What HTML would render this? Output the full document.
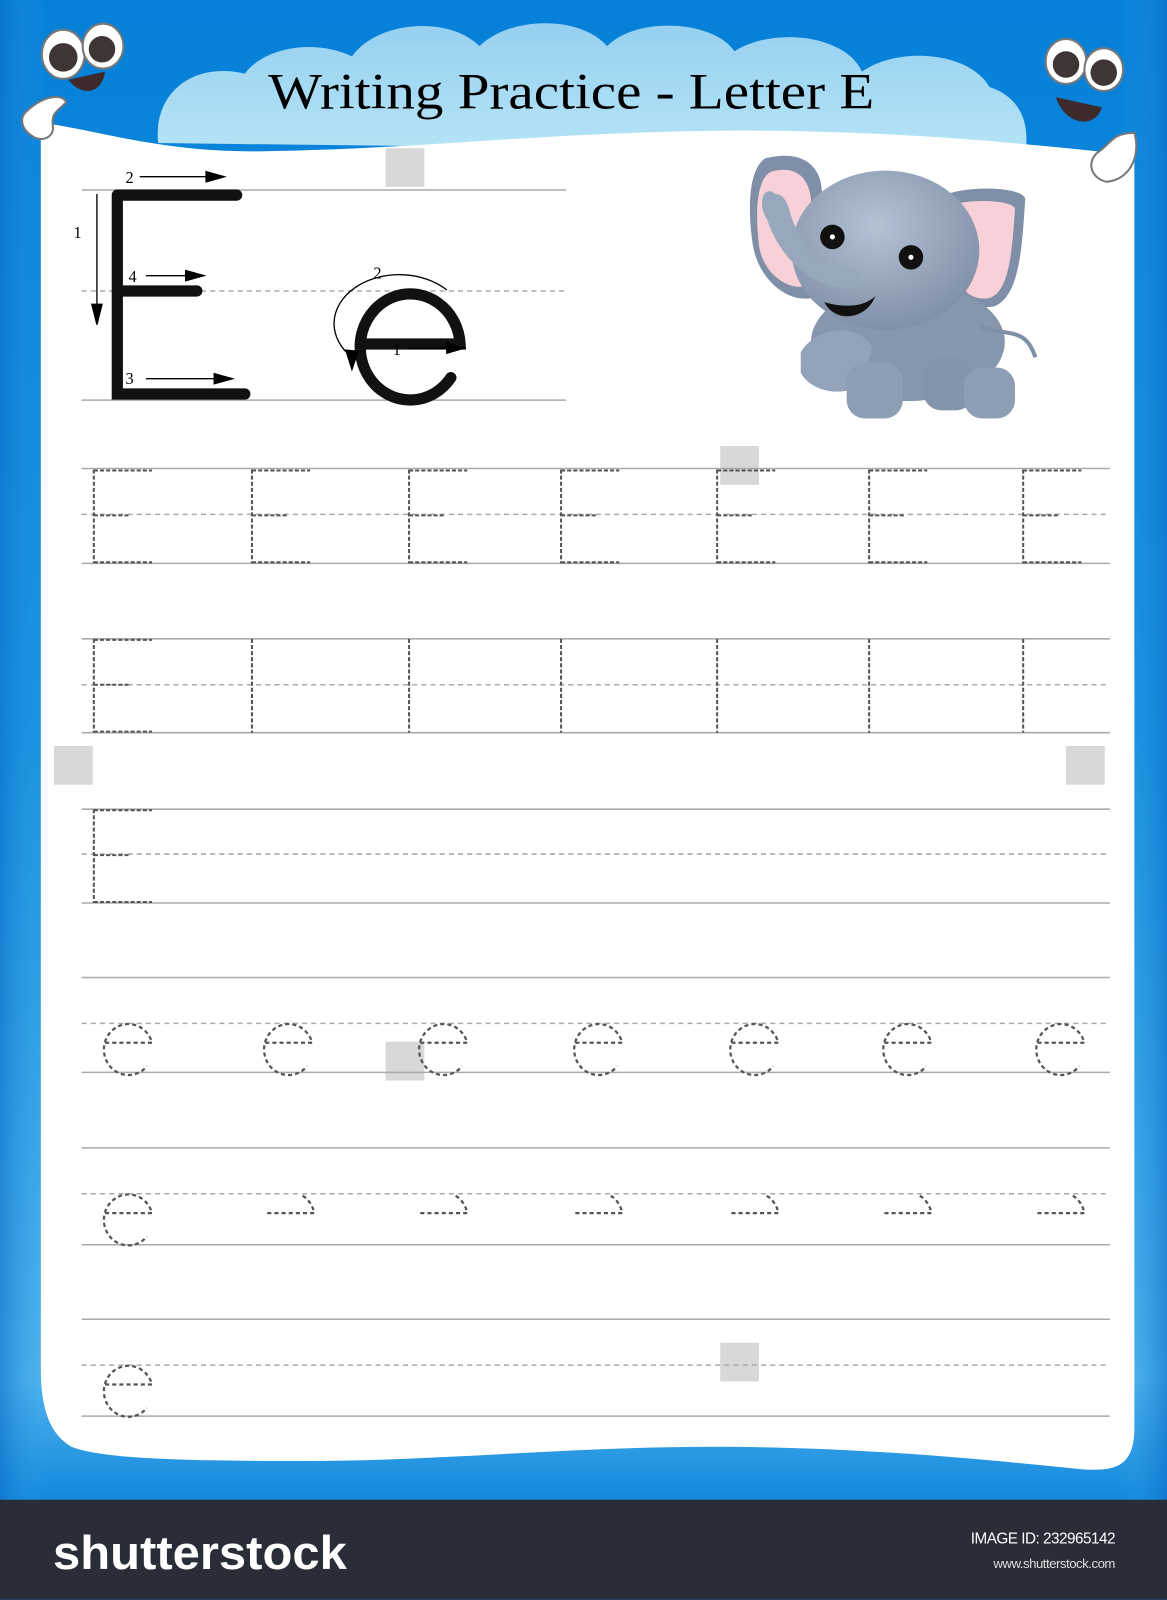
<!DOCTYPE html>
<html><head><meta charset="utf-8"><style>
html,body{margin:0;padding:0;width:1167px;height:1600px;overflow:hidden;background:#0a84d8}
svg{display:block}
</style></head><body>
<svg width="1167" height="1600" viewBox="0 0 1144 1568" xmlns="http://www.w3.org/2000/svg">
<defs>
<linearGradient id="bg" x1="0" y1="0" x2="0" y2="1"><stop offset="0" stop-color="#0680d8"/><stop offset="0.5" stop-color="#1a92e0"/><stop offset="0.92" stop-color="#4fb4ee"/><stop offset="1" stop-color="#1488dc"/></linearGradient>
<linearGradient id="bgx" x1="0" y1="0" x2="1" y2="0"><stop offset="0" stop-color="#0a6fc8" stop-opacity=".6"/><stop offset="0.04" stop-color="#3aa6ea" stop-opacity="0"/><stop offset="0.96" stop-color="#3aa6ea" stop-opacity="0"/><stop offset="1" stop-color="#0a6fc8" stop-opacity=".6"/></linearGradient>
<linearGradient id="cl" x1="0" y1="0" x2="0" y2="1"><stop offset="0" stop-color="#96d0f0"/><stop offset="1" stop-color="#b6e4f7"/></linearGradient>
<radialGradient id="el" cx="0.45" cy="0.35" r="0.7"><stop offset="0" stop-color="#b4c2d4"/><stop offset="1" stop-color="#7c8ca4"/></radialGradient>
<g id="E" fill="none" stroke="#555" stroke-width="2" stroke-dasharray="4 2">
<path d="M0 0V92M0 1H57M0 45H35M0 91H57"/></g>
<g id="ee" fill="none" stroke="#555" stroke-width="2.2" stroke-dasharray="4 3">
<path d="M-23 -6H23A24 25 0 1 0 18 17"/></g>
<g id="ep" fill="none" stroke="#555" stroke-width="2.2" stroke-dasharray="4 3">
<path d="M-23 -6H23A24 25 0 0 0 10 -24"/></g>
</defs>
<rect width="1144" height="1470" fill="url(#bg)"/>
<rect width="1144" height="1470" fill="url(#bgx)"/>
<path d="M155 140 C150 90 190 60 240 72 C260 45 310 38 345 55 C370 20 440 15 470 45 C500 15 570 15 595 45 C625 15 700 20 720 50 C760 25 830 35 845 70 C880 45 950 50 970 85 C1000 95 1010 120 1005 150 Z" fill="url(#cl)"/>
<text x="263" y="106" textLength="594" lengthAdjust="spacingAndGlyphs" font-family="Liberation Serif, serif" font-size="50" fill="#000">Writing Practice - Letter E</text>
<path d="M40 120 C100 128 160 150 260 148 C420 146 560 126 760 128 C900 130 1000 140 1112 152 L1112 1400 C1112 1440 1090 1442 1060 1440 C960 1430 840 1418 700 1418 C560 1418 430 1432 300 1432 C180 1432 100 1430 70 1418 C48 1405 40 1380 40 1340 Z" fill="#fff"/>
<g fill="#d8d8d8"><rect x="378" y="145" width="38" height="38"/><rect x="706" y="437" width="38" height="38"/><rect x="53" y="731" width="38" height="38"/><rect x="1045" y="731" width="38" height="38"/><rect x="378" y="1021" width="38" height="38"/><rect x="706" y="1316" width="38" height="38"/></g>
<g stroke="#aaa" stroke-width="1.5"><path d="M80 186H555M80 392H555"/><path d="M80 285H555" stroke-dasharray="5 4"/></g>
<g stroke="#111" stroke-width="11" stroke-linecap="round" fill="none">
<path d="M115 191V386H240M115 191H232M115 285H193"/>
<path d="M356 337H451A49 52 0 1 0 442 370"/></g>
<g stroke="#000" stroke-width="1.3" fill="#000">
<path d="M95 190V308"/><path d="M90 298L95 318L100 298Z"/>
<path d="M137 173H210"/><path d="M202 168L220 173L202 178Z"/>
<path d="M143 270H190"/><path d="M182 265L200 270L182 275Z"/>
<path d="M143 371H220"/><path d="M210 366L228 371L210 376Z"/>
<path d="M400 341H445"/><path d="M438 336L455 341L438 346Z"/>
<path d="M438 284A60 45 0 0 0 345 350" fill="none"/><path d="M339 343L345 362L351 344Z"/>
</g>
<g font-family="Liberation Serif, serif" font-size="16" fill="#000">
<text x="123" y="179">2</text><text x="72" y="233">1</text><text x="126" y="276">4</text><text x="123" y="376">3</text><text x="366" y="273">2</text><text x="385" y="348">1</text></g>
<g stroke="#aaa" stroke-width="1.5">
<path d="M80 459H1088M80 552H1088M80 626H1088M80 718H1088M80 793H1088M80 885H1088M80 958H1088M80 1051H1088M80 1125H1088M80 1220H1088M80 1293H1088M80 1388H1088"/>
<path d="M80 504H1088M80 671H1088M80 837H1088M80 1003H1088M80 1170H1088M80 1338H1088" stroke-dasharray="5 4"/></g>
<use href="#E" x="92" y="460"/><use href="#E" x="247" y="460"/><use href="#E" x="401" y="460"/><use href="#E" x="550" y="460"/><use href="#E" x="703" y="460"/><use href="#E" x="852" y="460"/><use href="#E" x="1003" y="460"/>
<use href="#E" x="92" y="626"/><use href="#E" x="92" y="793"/>
<g stroke="#555" stroke-width="2" stroke-dasharray="4 2"><path d="M247 626V718M401 626V718M550 626V718M703 626V718M852 626V718M1003 626V718"/></g>
<use href="#ee" x="126" y="1028"/><use href="#ee" x="283" y="1028"/><use href="#ee" x="435" y="1028"/><use href="#ee" x="587" y="1028"/><use href="#ee" x="740" y="1028"/><use href="#ee" x="890" y="1028"/><use href="#ee" x="1040" y="1028"/>
<use href="#ee" x="126" y="1195"/>
<use href="#ep" x="285" y="1195"/><use href="#ep" x="435" y="1195"/><use href="#ep" x="587" y="1195"/><use href="#ep" x="740" y="1195"/><use href="#ep" x="890" y="1195"/><use href="#ep" x="1040" y="1195"/>
<use href="#ee" x="126" y="1363"/>
<g>
<path d="M750 155 C790 145 810 165 805 200 L800 290 C780 300 745 280 738 240 C732 200 735 165 750 155Z" fill="#7f8fa7"/>
<path d="M756 168 C785 160 798 180 795 210 L790 280 C775 285 748 270 744 240 C740 205 742 175 756 168Z" fill="#f7d0d8"/>
<path d="M928 190 C960 180 1005 185 1005 195 C1002 240 1000 290 975 300 C950 305 930 290 925 260Z" fill="#7f8fa7"/>
<path d="M935 200 C960 194 995 197 995 205 C992 245 990 285 970 292 C950 295 938 282 935 255Z" fill="#f7d0d8"/>
<ellipse cx="890" cy="335" rx="95" ry="58" fill="#8596ad"/>
<path d="M960 320 C990 330 1005 320 1015 350" stroke="#7f8fa7" stroke-width="4" fill="none"/>
<path d="M785 345 C800 320 840 315 855 340 L845 375 C830 390 795 385 785 365Z" fill="#93a3b9"/>
<rect x="830" y="355" width="55" height="55" rx="18" fill="#8e9fb5"/>
<rect x="905" y="350" width="50" height="52" rx="18" fill="#8394ab"/>
<rect x="945" y="360" width="50" height="50" rx="18" fill="#8e9fb5"/>
<ellipse cx="868" cy="245" rx="92" ry="78" fill="url(#el)"/>
<path d="M760 190 C748 180 742 200 752 215 C762 245 790 285 840 282 C850 275 845 262 830 262 C800 262 785 240 775 210 C772 198 768 190 760 190Z" fill="#97a7bc"/>
<path d="M808 296 C830 302 848 300 858 290 C850 312 820 318 808 296Z" fill="#111"/>
<circle cx="816" cy="232" r="12" fill="#111"/><circle cx="816" cy="232" r="2.5" fill="#fff"/>
<circle cx="893" cy="252" r="12" fill="#111"/><circle cx="893" cy="252" r="2.5" fill="#fff"/>
</g>
<g stroke="#777" stroke-width="2"><ellipse cx="62" cy="53" rx="21" ry="24" fill="#fff"/><ellipse cx="101" cy="45" rx="20" ry="22" fill="#fff"/>
<ellipse cx="1045" cy="60" rx="20" ry="22" fill="#fff"/><ellipse cx="1082" cy="68" rx="19" ry="21" fill="#fff"/></g>
<g fill="#3e3535"><circle cx="62" cy="56" r="14"/><circle cx="100" cy="48" r="13"/><circle cx="1045" cy="63" r="13"/><circle cx="1082" cy="71" r="13"/></g>
<path d="M67 78 C80 95 100 92 103 70 Z" fill="#3e2a2a"/><path d="M1035 95 C1045 125 1075 125 1080 105 Z" fill="#3e2a2a"/>
<g fill="#fff" stroke="#777" stroke-width="2"><path d="M25 110 C40 95 60 90 65 100 C55 110 50 110 52 125 C52 135 40 140 30 132 C20 125 20 115 25 110Z"/>
<path d="M1112 130 C1118 150 1110 175 1085 178 C1070 175 1065 160 1075 150 C1090 140 1090 130 1112 130Z"/></g>
<rect y="1470" width="1144" height="98" fill="#282d37"/>
<text x="52" y="1538" textLength="288" lengthAdjust="spacingAndGlyphs" font-family="Liberation Sans, sans-serif" font-size="46" font-weight="bold" fill="#fff">shutterstock</text>
<text x="1093" y="1513" text-anchor="end" font-family="Liberation Sans, sans-serif" font-size="15" fill="#fff" letter-spacing="-0.5">IMAGE ID: 232965142</text>
<text x="1093" y="1537" text-anchor="end" font-family="Liberation Sans, sans-serif" font-size="13" fill="#ddd" letter-spacing="-0.5">www.shutterstock.com</text>
</svg>
</body></html>
